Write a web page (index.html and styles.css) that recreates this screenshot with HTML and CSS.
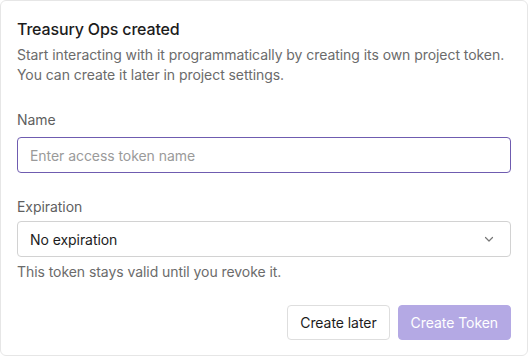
FILE: index.html
```html
<!DOCTYPE html>
<html>
<head>
<meta charset="utf-8">
<link rel="stylesheet" href="styles.css">
</head>
<body>
<div class="card">
  <h1 class="title">Treasury Ops created</h1>
  <p class="desc">Start interacting with it programmatically by creating its own project token. You can create it later in project settings.</p>
  <div class="field field-name">
    <label class="label">Name</label>
    <div class="input focused"><span class="placeholder">Enter access token name</span></div>
  </div>
  <div class="field field-exp">
    <label class="label">Expiration</label>
    <div class="input select">
      <span class="value">No expiration</span>
      <svg class="chev" width="12" height="12" viewBox="0 0 12 12"><path d="M2.5 4.5 L6 8 L9.5 4.5" fill="none" stroke="#777" stroke-width="1.2" stroke-linecap="round" stroke-linejoin="round"/></svg>
    </div>
    <p class="hint">This token stays valid until you revoke it.</p>
  </div>
  <div class="actions">
    <button class="btn btn-secondary">Create later</button>
    <button class="btn btn-primary">Create Token</button>
  </div>
</div>
</body>
</html>
```
FILE: styles.css
```css
* { box-sizing: border-box; }
html, body { margin: 0; padding: 0; background: #fff; }
body { font-family: Inter, "Noto Sans", sans-serif; letter-spacing: -0.06px; }
.card {
  width: 528px;
  height: 356px;
  border: 1px solid #e6e6e6;
  border-radius: 6px;
  padding: 16px 16px 15px 16px;
  display: flex;
  flex-direction: column;
}
.title {
  margin: 0;
  font-size: 16px;
  line-height: 24px;
  font-weight: 500;
  color: #1c1c1c;
  letter-spacing: -0.15px;
}
.desc {
  margin: 4px 0 0 0;
  font-size: 14px;
  line-height: 20px;
  color: #6b6b6b;
}
.field { display: flex; flex-direction: column; }
.field-name { margin-top: 25px; }
.field-exp { margin-top: 24px; }
.label {
  font-size: 14px;
  line-height: 20px;
  color: #5f5f5f;
  margin-bottom: 7px;
}
.field-exp .label { margin-bottom: 4px; }
.input {
  height: 36px;
  border: 1px solid #d2d2d2;
  border-radius: 4px;
  padding: 0 12px;
  display: flex;
  align-items: center;
  font-size: 14px;
}
.input.focused { border-color: #6f5cb0; }
.placeholder { color: #9a9a9a; }
.select { justify-content: space-between; padding-right: 15px; }
.value { color: #1c1c1c; }
.chev { display: block; }
.hint {
  margin: 5px 0 0 0;
  font-size: 14px;
  line-height: 20px;
  color: #6b6b6b;
}
.actions {
  margin-top: auto;
  display: flex;
  justify-content: flex-end;
  gap: 8px;
}
.btn {
  height: 35px;
  padding: 0 12px;
  border-radius: 4px;
  font-family: Inter, "Noto Sans", sans-serif;
  font-size: 14px;
  line-height: 20px;
  letter-spacing: -0.06px;
}
.btn-secondary {
  background: #fff;
  border: 1px solid #dedede;
  color: #1c1c1c;
}
.btn-primary {
  background: #b4a9e4;
  border: 1px solid #b4a9e4;
  color: #fff;
}
```
